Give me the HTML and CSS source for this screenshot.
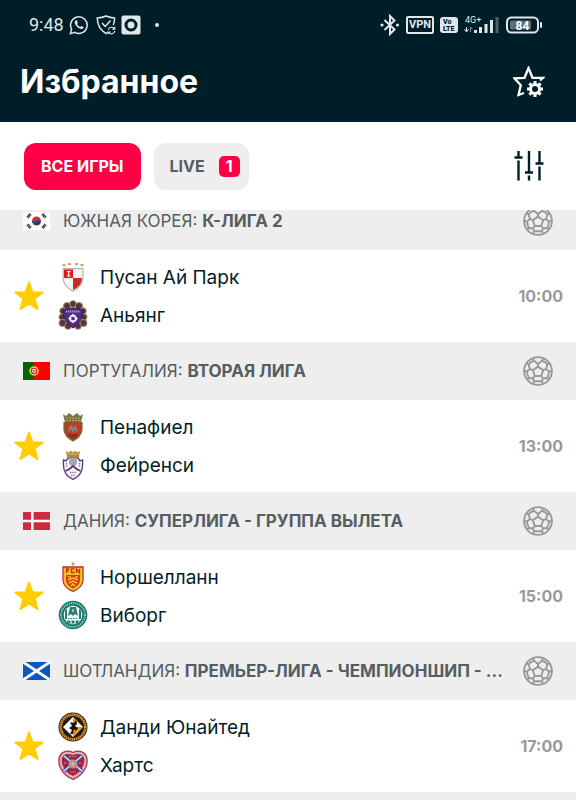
FILE: index.html
```html
<!DOCTYPE html>
<html lang="ru">
<head>
    <meta charset="UTF-8">
    <meta name="viewport" content="width=device-width, initial-scale=1.0">
    <title>Избранное</title>
    <link rel="stylesheet" href="styles.css">
</head>
<body>
    <!-- shared icons -->
    <svg class="sprite" aria-hidden="true">
        <symbol id="icon-star" viewBox="0 0 30 30">
            <path d="M15 1.6L18.4 11.2L28.6 11.4L20.5 17.6L23.5 28L15 22.3L6.5 28L9.5 17.6L1.4 11.4L11.6 11.2Z" fill="#ffcd00" stroke="#ffcd00" stroke-width="2" stroke-linejoin="round"/>
        </symbol>
        <symbol id="icon-ball" viewBox="-15 -15 30 30">
            <g fill="none" stroke="#999" stroke-width="1.9" stroke-linejoin="round">
                <circle r="13.9"/>
                <path d="M0 -4.4L5.2 -.8L3.2 5H-3.2L-5.2 -.8Z"/>
                <path d="M0 -4.4V-7M5.2 -.8L8 -2M3.2 5L5 7.500M-3.2 5L-5 7.500M-5.2 -.8L-8 -2"/>
                <path d="M5 -13L4 -10.200L0 -7L-4 -10.200L-5 -13M4 -10.200Q7.500 -9.500 9.500 -6.500M-4 -10.200Q-7.500 -9.500 -9.500 -6.500"/>
                <path d="M11.600 -7.800L9.500 -6.500L8 -2L11 .500L14 0M11 .500Q10.800 4 9 7M-11.600 -7.800L-9.500 -6.500L-8 -2L-11 .500L-14 0M-11 .500Q-10.800 4 -9 7"/>
                <path d="M11 8.600L9 7L5 7.500L4 10.200L5 13M4 10.200H-4M-11 8.600L-9 7L-5 7.500L-4 10.200L-5 13"/>
            </g>
        </symbol>
    </svg>

    <header class="header">
        <div class="status-bar">
            <div class="status-left">
                <span class="clock">9:48</span>
                <svg width="20" height="20" viewBox="0 0 20 20">
                    <path d="M1.4 18.6L2.6 14.2A8.3 8.3 0 1 1 5.8 17.4Z" fill="none" stroke="#dfe7ea" stroke-width="1.5"/>
                    <path d="M7 5.3C5.600 6 5.400 7.600 6.100 9.100C7.400 11.800 9.300 13.500 12.100 14C13.600 14 14.700 13.200 14.600 11.900L12.400 10.900L11.300 12.100C9.800 11.500 8.700 10.400 8 9L8.900 7.900L8 5.500Z" fill="#dfe7ea"/>
                </svg>
                <svg class="shield" width="20" height="20" viewBox="0 0 20 20" fill="none" stroke="#dfe7ea" stroke-width="1.500">
                    <path d="M12 17L10 18.500C5.500 16 1.500 11 1.200 3Q6 2.800 10 1Q14 2.800 18.600 3Q18.600 7 17.200 10"/>
                    <path d="M6 8L9.200 11.500L14.500 5.500"/>
                    <path d="M12.200 14.800A3.400 3.400 0 0 1 18.500 14M18.800 15.800A3.400 3.400 0 0 1 12.600 17.300M18.800 11.800V14.300H16.300M12.300 19.300V17H14.600" stroke-width="1.100"/>
                </svg>
                <svg width="20" height="20" viewBox="0 0 20 20">
                    <rect x=".5" y=".5" width="19" height="19" rx="2" fill="#dfe7ea"/>
                    <circle cx="10" cy="10" r="5" fill="#dfe7ea" stroke="#001e28" stroke-width="3"/>
                </svg>
                <span class="dot"></span>
            </div>
            <div class="status-right">
                <svg width="20" height="22" viewBox="0 0 20 22">
                    <path d="M4.500 6L14.500 15.500L10 20V2L14.500 6.500L4.500 16" fill="none" stroke="#dfe7ea" stroke-width="2"/>
                    <circle cx="2" cy="11" r="1.600" fill="#dfe7ea"/>
                    <circle cx="17.500" cy="11" r="1.600" fill="#dfe7ea"/>
                </svg>
                <span class="vpn">VPN</span>
                <svg class="volte" width="18" height="18" viewBox="0 0 18 18">
                    <rect y="1" width="18" height="16" rx="3" fill="#dfe7ea"/>
                    <text x="3" y="8">Vo</text>
                    <text x="3" y="15">LTE</text>
                </svg>
                <svg class="signal" width="36" height="20" viewBox="0 0 36 20">
                    <text x="1" y="8">4G+</text>
                    <path d="M2.500 12V16M.500 14.200L2.500 17L4.500 14.200" fill="none" stroke="#dfe7ea"/>
                    <path d="M6.500 17V12L8.500 14.200" fill="none" stroke="#7f9097"/>
                    <path d="M10 15H13V18H10ZM15 12H18V18H15ZM20.500 9H23.500V18H20.500ZM26 5H29V18H26Z" fill="#dfe7ea"/>
                    <path d="M31.500 2H34.500V18H31.500Z" fill="#4d6068"/>
                </svg>
                <svg class="battery" width="37" height="18" viewBox="0 0 37 18">
                    <rect x="1" y="1.500" width="31" height="15" rx="4.500" fill="none" stroke="#dfe7ea" stroke-width="2"/>
                    <rect x="4" y="4.500" width="21" height="9" rx="1.500" fill="#5c6d74"/>
                    <rect x="34" y="6" width="2" height="6" rx="1" fill="#dfe7ea"/>
                    <text x="16.500" y="13.500" text-anchor="middle">84</text>
                </svg>
            </div>
        </div>
        <div class="title-bar">
            <h1>Избранное</h1>
            <button class="icon-button" type="button" aria-label="Настройки избранного">
                <svg width="32" height="32" viewBox="0 0 32 32">
                    <path d="M11 27L5.500 29L7.800 19.300L1.500 12.400L11.500 11.800L15.500 2L19.500 11.800H30L27 14.500" fill="none" stroke="#fff" stroke-width="2.300"/>
                    <circle cx="22" cy="23" r="4.500" fill="none" stroke="#fff" stroke-width="3"/>
                    <path d="M22 15V18M22 28V31M14 23H17M27 23H30M16.400 17.400L18.400 19.400M25.600 26.600L27.600 28.600M27.600 17.400L25.600 19.400M18.400 26.600L16.400 28.600" stroke="#fff" stroke-width="3"/>
                </svg>
            </button>
        </div>
    </header>

    <nav class="filters">
        <button class="chip chip-active" type="button">ВСЕ ИГРЫ</button>
        <button class="chip chip-live" type="button">LIVE <span class="count">1</span></button>
        <button class="icon-button sliders" type="button" aria-label="Фильтры">
            <svg width="30" height="30" viewBox="0 0 30 30" fill="none" stroke="#001e28" stroke-width="2.400">
                <path d="M4.500 0V6.500M.500 6.500H8.500M4.500 9.500V29.500"/>
                <path d="M15 0V21.500M11 21.500H19M15 24.500V29.500"/>
                <path d="M25.500 0V12.500M21.500 12.500H29.500M25.500 15.500V29.500"/>
            </svg>
        </button>
    </nav>

    <main class="list">
        <div class="list-inner">
            <section>
                <h2 class="league">
                    <svg class="flag" viewBox="0 0 27 18">
                        <rect width="27" height="18" fill="#fff"/>
                        <circle cx="13.500" cy="9" r="4.500" fill="#cd2e3a"/>
                        <path d="M9.800 6.500A4.500 4.500 0 0 0 17.200 11.500A2.200 2.200 0 0 0 13.500 9A2.200 2.200 0 0 1 9.800 6.500Z" fill="#0047a0"/>
                        <path d="M4.500 5.500L7.500 2M19.500 2L22.500 5.500M4.500 12.500L7.500 16M19.500 16L22.500 12.500" stroke="#333" stroke-width="3" stroke-dasharray="1.200 .500"/>
                    </svg>
                    <span class="league-name">ЮЖНАЯ КОРЕЯ: <b>К-ЛИГА 2</b></span>
                    <svg class="ball"><use href="#icon-ball"/></svg>
                </h2>
                <article class="match">
                    <button class="fav" type="button" aria-label="Убрать из избранного"><svg><use href="#icon-star"/></svg></button>
                    <div class="teams">
                        <div class="team">
                            <svg class="crest" viewBox="0 0 30 30">
                                <path d="M5 6.500H25V17Q24 25 15 29.500Q6 25 5 17Z" fill="#ddd" stroke="#b6b1b0"/>
                                <path d="M6 7.500H15V16H6Z" fill="#dc1f1c"/>
                                <path d="M15 16H24Q24 24 15 28Z" fill="#c92c27"/>
                                <path d="M15 7.500H24V16H15ZM6 16H15V28Q6 23 6 16Z" fill="#f6f4f3"/>
                                <path d="M9 9.500H12.500M9 14H12.500M10.700 9.500V14" stroke="#fff" stroke-width="1.200"/>
                                <path d="M4.500 3.200H7.500M10 2.200H13M17 2.200H20M22.500 3.200H25.500" stroke="#cda95f" stroke-width="2.200"/>
                            </svg>
                            <span>Пусан Ай Парк</span>
                        </div>
                        <div class="team">
                            <svg class="crest" viewBox="0 0 30 30">
                                <g fill="#51343d" stroke="#a9825d" stroke-width="1">
                                    <circle cx="15" cy="4" r="3.300"/><circle cx="9" cy="6" r="3.500"/><circle cx="21" cy="6" r="3.500"/>
                                    <circle cx="5" cy="11" r="3.200"/><circle cx="25" cy="11" r="3.200"/><circle cx="4" cy="17" r="3"/><circle cx="26" cy="17" r="3"/>
                                    <circle cx="4.500" cy="23" r="3.500"/><circle cx="25.500" cy="23" r="3.500"/><circle cx="10" cy="26" r="3.300"/><circle cx="20" cy="26" r="3.300"/>
                                </g>
                                <path d="M5 10Q15 6 25 10Q25 22 15 28Q5 22 5 10Z" fill="#502b85" stroke="#302050"/>
                                <path d="M8 11.500H22" stroke="#a797ca" stroke-width="2" stroke-dasharray="1.400 .600"/>
                                <circle cx="15" cy="18.500" r="3" fill="none" stroke="#fff" stroke-width="1.600"/>
                                <path d="M15 14V17M15 20V23M10.500 18.500H13.500M16.500 18.500H19.500" stroke="#fff" stroke-width="1.500"/>
                            </svg>
                            <span>Аньянг</span>
                        </div>
                    </div>
                    <time class="time">10:00</time>
                </article>
            </section>

            <section>
                <h2 class="league">
                    <svg class="flag" viewBox="0 0 27 18">
                        <rect width="27" height="18" fill="#f00"/>
                        <rect width="11" height="18" fill="#060"/>
                        <circle cx="11" cy="9" r="4" fill="none" stroke="#e8d84a" stroke-width="1.500"/>
                        <path d="M6.500 9H15.500M8 6L14 12M14 6L8 12" stroke="#d9c83c" stroke-width=".700"/>
                        <path d="M9 6.500H13V9.500Q13 11 11 11.500Q9 11 9 9.500Z" fill="#fff" stroke="#d22" stroke-width=".900"/>
                        <path d="M11 8V10" stroke="#258" stroke-width="1.200"/>
                    </svg>
                    <span class="league-name">ПОРТУГАЛИЯ: <b>ВТОРАЯ ЛИГА</b></span>
                    <svg class="ball"><use href="#icon-ball"/></svg>
                </h2>
                <article class="match">
                    <button class="fav" type="button" aria-label="Убрать из избранного"><svg><use href="#icon-star"/></svg></button>
                    <div class="teams">
                        <div class="team">
                            <svg class="crest" viewBox="0 0 30 30">
                                <path d="M5 2L8 4L11 1L15 4L19 1L22 4L25 2L23 10H7Z" fill="#79734a"/>
                                <path d="M8 6H22M8 8.500H22" stroke="#c1aa5c" stroke-dasharray="2 1"/>
                                <path d="M6 10.500Q15 9 24 10.500V18Q23 25 15 29Q7 25 6 18Z" fill="#b93d20" stroke="#756a36" stroke-width="1.200"/>
                                <path d="M10 20L11 15L14 13L15 16L18 13L20 20L17 18L15 21L13 18Z" fill="#87817a"/>
                                <path d="M10 23H20M12 25H18" stroke="#773017" stroke-width="1.300"/>
                            </svg>
                            <span>Пенафиел</span>
                        </div>
                        <div class="team">
                            <svg class="crest" viewBox="0 0 30 30">
                                <path d="M5.500 10L8 11L10 8H20L22 11L24.500 10Q26 25 15 29.300Q4 25 5.500 10Z" fill="#faf8fc" stroke="#574280" stroke-width="1.400"/>
                                <path d="M8 1L10.500 2.500L13 .800L15 2.500L17 .800L19.500 2.500L22 1L21 7H9Z" fill="#b38b40"/>
                                <path d="M10 4H20" stroke="#e8c66e" stroke-dasharray="2 1"/>
                                <path d="M11 8H19V14L15 17L11 14Z" fill="#aaa6ab"/>
                                <path d="M7.500 21Q11 20 15 16Q19 20 22.500 21" fill="none" stroke="#574280" stroke-width="1.800"/>
                                <path d="M8.500 13V17M21.500 13V17M12 22.500H18M13 25.500H17" stroke="#d4657e" stroke-width="1.500" stroke-dasharray="1.500 .700"/>
                            </svg>
                            <span>Фейренси</span>
                        </div>
                    </div>
                    <time class="time">13:00</time>
                </article>
            </section>

            <section>
                <h2 class="league">
                    <svg class="flag" viewBox="0 0 27 18">
                        <rect width="27" height="18" fill="#d12a40"/>
                        <path d="M9.300 0V18M0 9H27" stroke="#fff" stroke-width="2.600"/>
                    </svg>
                    <span class="league-name">ДАНИЯ: <b>СУПЕРЛИГА - ГРУППА ВЫЛЕТА</b></span>
                    <svg class="ball"><use href="#icon-ball"/></svg>
                </h2>
                <article class="match">
                    <button class="fav" type="button" aria-label="Убрать из избранного"><svg><use href="#icon-star"/></svg></button>
                    <div class="teams">
                        <div class="team">
                            <svg class="crest" viewBox="0 0 30 30">
                                <path d="M15 .500V3.500M13.500 1.500H16.500" stroke="#e17a7c" stroke-width="1.600"/>
                                <path d="M5 5H25V19Q24 26 15 29.300Q6 26 5 19Z" fill="#f5c321" stroke="#ad3628" stroke-width="1.300"/>
                                <path d="M8.500 11V6.800H11.500M8.500 8.800H11M16.500 6.800H13.500V10.500H16.500M18.500 11V7L21.500 10.800V6.800" fill="none" stroke="#c22b26" stroke-width="1.300"/>
                                <path d="M8 13H22V19Q21 24 15 26.500Q9 24 8 19Z" fill="#d73923"/>
                                <path d="M10 15H13M17 15H20M10 18L15 16L20 18M11 21L15 19L19 21M13 24L15 22L17 24" fill="none" stroke="#f8c626" stroke-width="1.500"/>
                            </svg>
                            <span>Норшелланн</span>
                        </div>
                        <div class="team">
                            <svg class="crest" viewBox="0 0 30 30">
                                <circle cx="15" cy="15" r="14.300" fill="#16796c"/>
                                <circle cx="15" cy="15" r="12" fill="none" stroke="#9dc8bf" stroke-width="2" stroke-dasharray="1.100 .900"/>
                                <circle cx="15" cy="15" r="9.300" fill="#fff"/>
                                <path d="M7 19V11L9 8.500V19ZM23 19V11L21 8.500V19ZM10 16L12 7H18L20 16L17 14L15 16L13 14ZM8.500 20.500H21.500L19 23.500H11Z" fill="#247e70"/>
                                <path d="M13 20V23.500M17 20V23.500M15 9V12" stroke="#fff" stroke-width="1.100"/>
                                <path d="M10 18.500H20" stroke="#247e70" stroke-width="1.200" stroke-dasharray="1.500 1"/>
                            </svg>
                            <span>Виборг</span>
                        </div>
                    </div>
                    <time class="time">15:00</time>
                </article>
            </section>

            <section>
                <h2 class="league">
                    <svg class="flag" viewBox="0 0 27 18">
                        <rect width="27" height="18" fill="#0759bd"/>
                        <path d="M0 0L27 18M27 0L0 18" stroke="#fff" stroke-width="2.800"/>
                    </svg>
                    <span class="league-name">ШОТЛАНДИЯ: <b>ПРЕМЬЕР-ЛИГА - ЧЕМПИОНШИП - ...</b></span>
                    <svg class="ball"><use href="#icon-ball"/></svg>
                </h2>
                <article class="match">
                    <button class="fav" type="button" aria-label="Убрать из избранного"><svg><use href="#icon-star"/></svg></button>
                    <div class="teams">
                        <div class="team">
                            <svg class="crest" viewBox="0 0 30 30">
                                <circle cx="15" cy="15" r="14.500" fill="#211c17"/>
                                <circle cx="15" cy="15" r="12.300" fill="none" stroke="#d9912b" stroke-width="2.800" stroke-dasharray="1.600 .500"/>
                                <path d="M15 5L25 15L15 25L5 15Z" fill="#fff"/>
                                <path d="M15 5L20 10L15 15ZM15 15H25L15 25Z" fill="#ee951f"/>
                                <path d="M12 10L16 11L18 8L19 12L17 14L20 16L18 19L16 17L15 22L12 22L14 18L11 16L14 14Z" fill="#171512"/>
                            </svg>
                            <span>Данди Юнайтед</span>
                        </div>
                        <div class="team">
                            <svg class="crest" viewBox="0 0 30 30">
                                <path d="M15 2.500Q21 -.500 26 3Q31 8 28 17Q24 26 15 29.300Q6 26 2 17Q-1 8 4 3Q9 -.500 15 2.500Z" fill="#ddb1b9" stroke="#a83649" stroke-width="1.300"/>
                                <path d="M15 5Q20 3 24 5Q28 9 25 16Q22 23 15 26Q8 23 5 16Q2 9 6 5Q10 3 15 5Z" fill="#a51e3b"/>
                                <path d="M6 6L24 21M24 6L6 21" stroke="#365da9" stroke-width="3.600"/>
                                <path d="M6 6L24 21M24 6L6 21" stroke="#eef0f7" stroke-width="1.100"/>
                                <circle cx="15" cy="14" r="4.500" fill="#b68e91"/>
                                <path d="M12.500 14H17.500M15 11.500V16.500" stroke="#d9c6b0"/>
                                <path d="M11 6.500H19M6 13H9M21 13H24M12 22H18" stroke="#d07a76" stroke-width="1.600" stroke-dasharray="1.500 1"/>
                            </svg>
                            <span>Хартс</span>
                        </div>
                    </div>
                    <time class="time">17:00</time>
                </article>
            </section>

            <div class="league"></div>
        </div>
    </main>
</body>
</html>
```

FILE: styles.css
```css
* {
    box-sizing: border-box;
}
body {
    margin: 0;
    height: 100vh;
    display: flex;
    flex-direction: column;
    overflow: hidden;
    background: #fff;
    color: #001e28;
    font-family: Inter, "Liberation Sans", sans-serif;
}
svg {
    display: block;
    flex: none;
}
button {
    border: none;
    padding: 0;
    background: none;
    font: inherit;
    cursor: pointer;
}
.sprite {
    position: absolute;
    width: 0;
    height: 0;
}

/* header */
.header {
    flex: none;
    background: #001e28;
    color: #fff;
}
.status-bar {
    display: flex;
    justify-content: space-between;
    align-items: center;
    height: 50px;
    padding: 0 33px 0 29px;
    color: #dfe7ea;
    font-family: Roboto, sans-serif;
}
.status-left,
.status-right {
    display: flex;
    align-items: center;
    gap: 6px;
}
.status-left {
    gap: 5px;
}
.shield {
    margin-left: 2px;
}
.clock {
    font-size: 18px;
    line-height: 20px;
}
.dot {
    width: 4px;
    height: 4px;
    margin-left: 9px;
    border-radius: 50%;
    background: #dfe7ea;
}
.vpn {
    width: 28px;
    border: 2px solid #dfe7ea;
    border-radius: 2px;
    font-size: 11px;
    font-weight: 700;
    line-height: 14px;
    text-align: center;
}
.volte text {
    font-size: 7px;
    font-weight: 900;
    fill: #001e28;
}
.signal text {
    font-size: 9px;
    fill: #dfe7ea;
}
.battery text {
    font-size: 12px;
    font-weight: 700;
    fill: #fff;
}
.title-bar {
    display: flex;
    justify-content: space-between;
    align-items: center;
    height: 72px;
    padding: 0 31px 8px 20px;
}
h1 {
    margin: 0;
    font-size: 32px;
    font-weight: 700;
    line-height: 40px;
}

/* filters */
.filters {
    flex: none;
    display: flex;
    align-items: center;
    gap: 13px;
    height: 88px;
    padding: 0 32px 0 24px;
}
.chip {
    display: flex;
    align-items: center;
    height: 47px;
    padding: 0 17px;
    border-radius: 12px;
    background: #eee;
    color: #555e61;
    font-size: 16px;
    font-weight: 700;
}
.chip-active {
    background: #ff0046;
    color: #fff;
}
.chip-live {
    gap: 14px;
    padding: 0 9px 0 16px;
}
.count {
    width: 21px;
    border-radius: 5px;
    background: #ff0046;
    color: #fff;
    line-height: 21px;
    text-align: center;
}
.sliders {
    margin-left: auto;
}

/* match list */
.list {
    flex: 1;
    min-height: 0;
    overflow: hidden;
}
/* the list is scrolled a little under the filters */
.list-inner {
    margin-top: -18px;
}
.league {
    display: flex;
    align-items: center;
    height: 58px;
    margin: 0;
    padding: 0 23px;
    background: #eee;
    color: #555e61;
    font-size: 17px;
    font-weight: 400;
}
.flag {
    width: 27px;
    height: 18px;
    margin-right: 13px;
}
.league-name {
    flex: 1;
    min-width: 0;
    white-space: nowrap;
}
.ball {
    width: 30px;
    height: 30px;
}
.match {
    display: flex;
    align-items: center;
    height: 92px;
    padding: 0 13px 0 14px;
}
.fav svg {
    width: 30px;
    height: 30px;
}
.teams {
    flex: 1;
    margin-left: 14px;
}
.team {
    display: flex;
    align-items: center;
    gap: 12px;
    height: 38px;
    font-size: 19px;
}
.crest {
    width: 30px;
    height: 30px;
}
.time {
    color: #999;
    font-size: 16px;
    font-weight: 700;
}
```
